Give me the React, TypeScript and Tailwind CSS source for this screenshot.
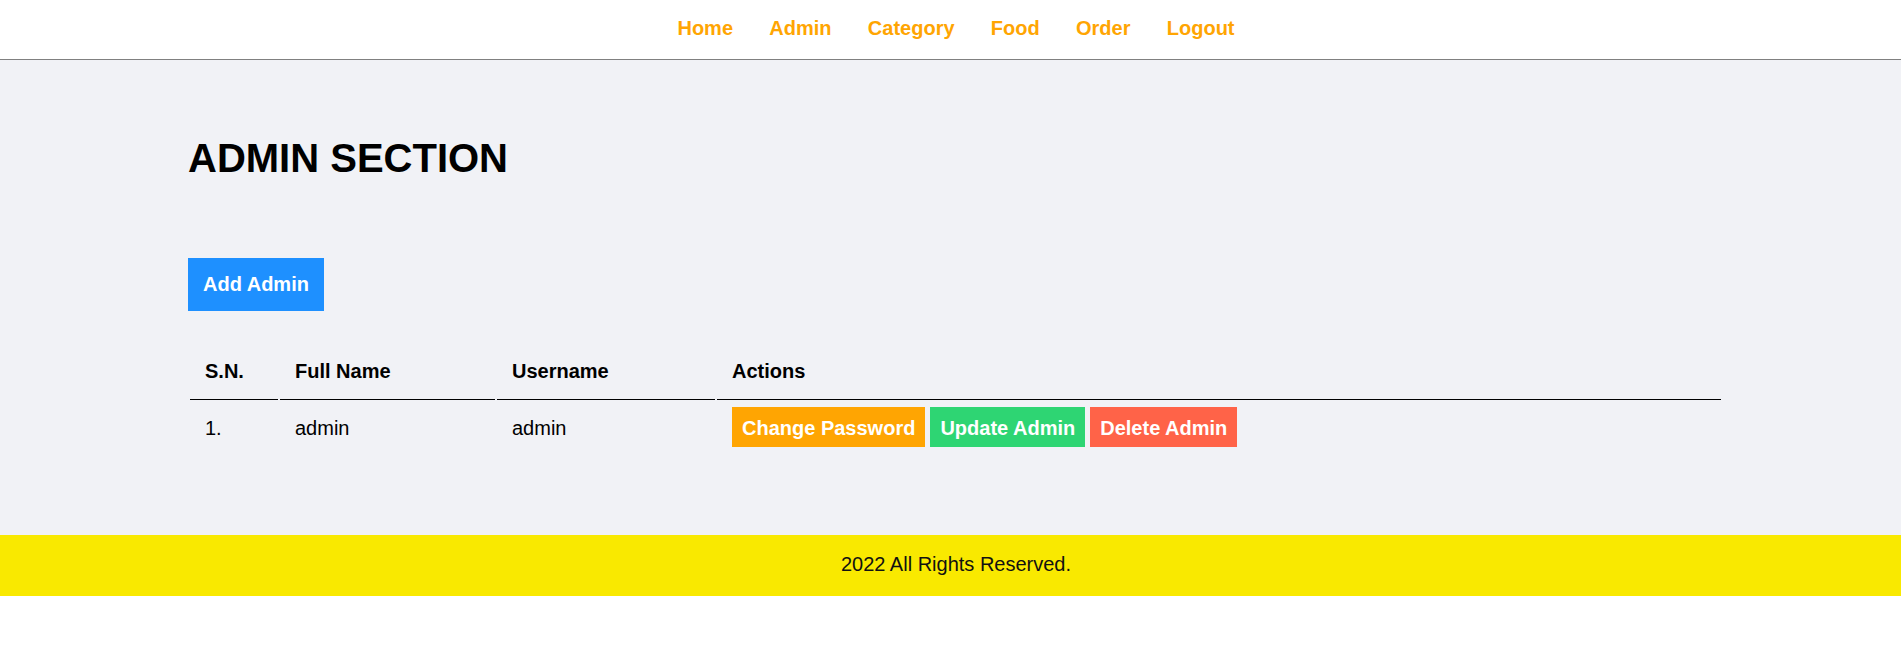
const navLinks = ['Home', 'Admin', 'Category', 'Food', 'Order', 'Logout'];

const columns = [
  { label: 'S.N.', width: 'w-[88px]' },
  { label: 'Full Name', width: 'w-[215px]' },
  { label: 'Username', width: 'w-[218px]' },
  { label: 'Actions', width: 'w-[1004px]' },
];

// Admin list page
export default function App() {
  return (
    <div className="min-h-screen bg-white text-black font-['Liberation_Sans',Arial,sans-serif]">
      {/* Menu */}
      <header className="h-[60px] border-b border-[#808080] bg-white">
        <nav className="flex justify-center gap-[36.3px] pl-[11px] pt-[17px]">
          {navLinks.map((link) => (
            <a key={link} href="#" className="text-[20px] leading-[23px] font-bold text-[#ffa502]">
              {link}
            </a>
          ))}
        </nav>
      </header>

      {/* Main content */}
      <main className="bg-[#f1f2f6] pt-[75px] pb-[79px]">
        <div className="ml-[188px] w-[1536px] flex flex-col items-start">
          <h1 className="text-[40px] leading-[46px] font-bold">ADMIN SECTION</h1>

          <a
            href="#"
            className="mt-[77px] h-[53px] px-[15px] py-[15px] bg-[#1e90ff] text-white text-[20px] leading-[23px] font-bold"
          >
            Add Admin
          </a>

          <div className="mt-[34px] pl-[2px] flex flex-col gap-[2px]">
            <div className="flex gap-[2px]">
              {columns.map((col) => (
                <div
                  key={col.label}
                  className={`${col.width} h-[55px] pl-[15px] pt-[15px] border-b border-black text-[20px] leading-[23px] font-bold`}
                >
                  {col.label}
                </div>
              ))}
            </div>

            <div className="flex gap-[2px] h-[54px] text-[20px] leading-[23px]">
              <div className="w-[88px] pl-[15px] pt-[15px]">1.</div>
              <div className="w-[215px] pl-[15px] pt-[15px]">admin</div>
              <div className="w-[218px] pl-[15px] pt-[15px]">admin</div>
              <div className="w-[1004px] pl-[15px] pt-[5px] flex items-start gap-[5px] font-bold text-white">
                <a href="#" className="h-[40px] px-[10px] pt-[10px] bg-[#ffa502]">Change Password</a>
                <a href="#" className="h-[40px] px-[10px] pt-[10px] bg-[#2ed573]">Update Admin</a>
                <a href="#" className="h-[40px] px-[10px] pt-[10px] bg-[#ff6348]">Delete Admin</a>
              </div>
            </div>
          </div>
        </div>
      </main>

      {/* Footer */}
      <footer className="h-[61px] bg-[#f9e900] pt-[18px] pl-[11px] text-center">
        <p className="text-[20px] leading-[23px] text-[#111]">2022 All Rights Reserved.</p>
      </footer>
    </div>
  );
}
